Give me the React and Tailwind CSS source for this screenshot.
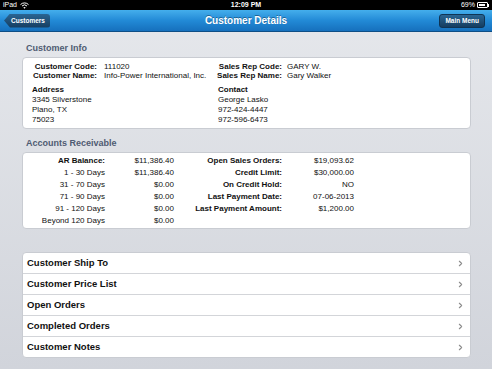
import { ChevronRight } from 'lucide-react';

const info = [
  ['Customer Code:', '111020', 'Sales Rep Code:', 'GARY W.'],
  ['Customer Name:', 'Info-Power International, Inc.', 'Sales Rep Name:', 'Gary Walker'],
];

const ar = [
  ['AR Balance:', '$11,386.40', 'Open Sales Orders:', '$19,093.62', true],
  ['1 - 30 Days', '$11,386.40', 'Credit Limit:', '$30,000.00'],
  ['31 - 70 Days', '$0.00', 'On Credit Hold:', 'NO'],
  ['71 - 90 Days', '$0.00', 'Last Payment Date:', '07-06-2013'],
  ['91 - 120 Days', '$0.00', 'Last Payment Amount:', '$1,200.00'],
  ['Beyond 120 Days', '$0.00', '', ''],
];

const links = ['Customer Ship To', 'Customer Price List', 'Open Orders', 'Completed Orders', 'Customer Notes'];

function Wifi() {
  return (
    <svg width="9" height="7" viewBox="0 0 9 7" className="ml-[3px]">
      <path d="M0.5 2.6 A5.6 5.6 0 0 1 8.5 2.6" stroke="white" strokeWidth="1" fill="none" />
      <path d="M2 4 A3.6 3.6 0 0 1 7 4" stroke="white" strokeWidth="1" fill="none" />
      <path d="M3.3 5.5 L4.5 6.8 L5.7 5.5 A1.7 1.7 0 0 0 3.3 5.5Z" fill="white" />
    </svg>
  );
}

export default function App() {
  return (
    <div className="w-[492px] h-[369px] overflow-hidden bg-gradient-to-b from-[#e6e8ec] to-[#d1d4db] font-['Liberation_Sans',Arial,sans-serif]">
      {/* status bar */}
      <div className="h-[10px] bg-black text-white text-[7px] leading-[10px] flex items-center justify-between px-[3px]">
        <div className="flex items-center w-[60px]">
          iPad
          <Wifi />
        </div>
        <div className="font-bold">12:09 PM</div>
        <div className="flex items-center justify-end w-[60px] gap-[2px]">
          <span>69%</span>
          <div className="flex items-center">
            <div className="w-[11px] h-[6px] border border-white rounded-[1px] p-[1px]">
              <div className="w-[6px] h-full bg-white" />
            </div>
            <div className="w-[1px] h-[3px] bg-white" />
          </div>
        </div>
      </div>

      {/* nav bar */}
      <div className="h-[22px] bg-gradient-to-b from-[#44aeec] via-[#228ad6] to-[#1670bd] border-b border-[#0f4f86] flex items-center justify-between px-[4px] relative">
        <div className="h-[14px] pl-[7px] pr-[5px] flex items-center bg-gradient-to-b from-[#2a6592] to-[#153d60] text-white text-[6.5px] font-bold rounded-r-[3px] [clip-path:polygon(6px_0,100%_0,100%_100%,6px_100%,0_50%)]">
          Customers
        </div>
        <div className="absolute left-0 right-0 text-center text-white text-[10px] font-bold [text-shadow:0_-1px_0_rgba(0,0,0,0.35)] pointer-events-none">
          Customer Details
        </div>
        <div className="h-[14px] px-[5px] mr-[3px] flex items-center bg-gradient-to-b from-[#2a6592] to-[#153d60] border border-[#0f3454] text-white text-[6.5px] font-bold rounded-[3px]">
          Main Menu
        </div>
      </div>

      <div className="ml-[22px] mr-[21px]">
        <div className="mt-[11px] mb-[4px] pl-[4px] h-[10px] leading-[10px] text-[9px] font-bold text-[#4f5b72]">Customer Info</div>
        <div className="bg-white border border-[#c9ccd2] rounded-[4px] pl-[8px] pt-[4px] pb-[3px] text-[8px] text-[#111]">
          {info.map((r) => (
            <div key={r[0]} className="flex h-[9px] leading-[9px]">
              <div className="w-[66px] text-right font-bold">{r[0]}</div>
              <div className="ml-[7px] w-[108px]">{r[1]}</div>
              <div className="w-[70px] text-right font-bold">{r[2]}</div>
              <div className="ml-[5px]">{r[3]}</div>
            </div>
          ))}
          <div className="flex mt-[5px] pl-[1px] leading-[10px]">
            <div className="w-[186px]">
              <div className="font-bold">Address</div>
              <div>3345 Silverstone</div>
              <div>Plano, TX</div>
              <div>75023</div>
            </div>
            <div>
              <div className="font-bold">Contact</div>
              <div>George Lasko</div>
              <div>972-424-4447</div>
              <div>972-596-6473</div>
            </div>
          </div>
        </div>

        <div className="mt-[9px] mb-[4px] pl-[4px] h-[10px] leading-[10px] text-[9px] font-bold text-[#4f5b72]">Accounts Receivable</div>
        <div className="bg-white border border-[#c9ccd2] rounded-[4px] pl-[8px] pt-[2px] pb-[1px] text-[8px] text-[#111]">
          {ar.map((r) => (
            <div key={r[0]} className="grid grid-cols-[74px_69px_108px_72px] h-[12px] leading-[12px]">
              <div className={r[4] ? 'text-right font-bold' : 'text-right'}>{r[0]}</div>
              <div className="text-right">{r[1]}</div>
              <div className="text-right font-bold">{r[2]}</div>
              <div className="text-right">{r[3]}</div>
            </div>
          ))}
        </div>

        <div className="mt-[23px] bg-white border border-[#c9ccd2] rounded-[4px]">
          {links.map((l, i) => (
            <div
              key={l}
              className={
                i < links.length - 1
                  ? 'h-[21px] border-b border-[#d3d5d9] flex items-center justify-between pl-[4px] pr-[5px]'
                  : 'h-[20px] flex items-center justify-between pl-[4px] pr-[5px]'
              }
            >
              <span className="text-[9.5px] font-bold text-[#111]">{l}</span>
              <ChevronRight size={9} strokeWidth={3} color="#8c8c8c" />
            </div>
          ))}
        </div>
      </div>
    </div>
  );
}
